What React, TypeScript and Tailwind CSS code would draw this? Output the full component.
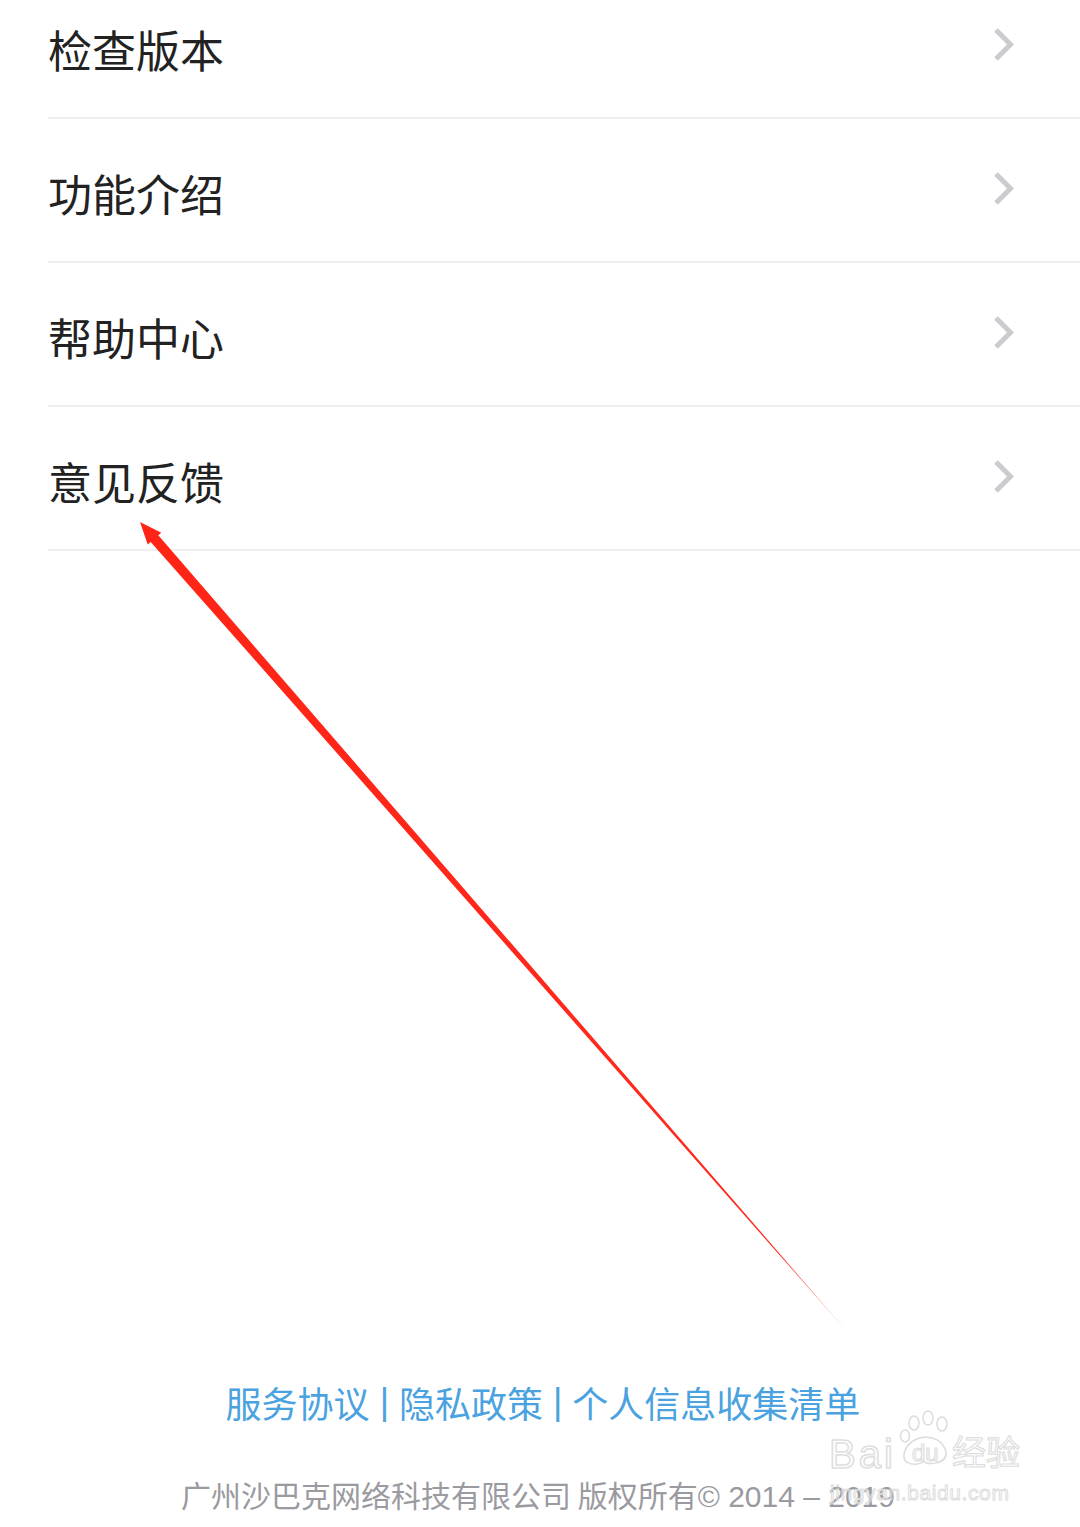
const items = ['检查版本', '功能介绍', '帮助中心', '意见反馈']

function Chevron() {
    return (
        <svg width="24" height="38" viewBox="0 0 24 38" className="mr-[64px] -mt-[8px]">
            <path d="M4 4 L18.5 18.5 L4 33" fill="none" stroke="#cbcbcf" strokeWidth="5" />
        </svg>
    )
}

// red annotation arrow drawn over the page
function Arrow() {
    return (
        <svg width="1080" height="1527" viewBox="0 0 1080 1527" className="absolute left-0 top-0 pointer-events-none">
            <defs>
                <linearGradient id="fade" x1="140" y1="522" x2="850" y2="1335" gradientUnits="userSpaceOnUse">
                    <stop offset="0" stopColor="#ff2415" />
                    <stop offset="0.9" stopColor="#ff2a1f" />
                    <stop offset="1" stopColor="#ff3b30" stopOpacity="0.25" />
                </linearGradient>
            </defs>
            <polygon
                points="140,522 161.3,532.7 158.3,535.3 850,1335 150.7,541.9 147.7,544.5"
                fill="url(#fade)"
            />
        </svg>
    )
}

function Watermark() {
    return (
        <div className="absolute left-[826px] top-[1408px] w-[200px] h-[96px] pointer-events-none font-['Liberation_Sans',sans-serif]">
            <svg width="200" height="96" viewBox="0 0 200 96" className="absolute left-0 top-0">
                <g fill="none" stroke="#dcdcdc" strokeWidth="1.5">
                    <ellipse cx="88" cy="15" rx="5" ry="7" />
                    <ellipse cx="102" cy="10" rx="5" ry="7" />
                    <ellipse cx="116" cy="16" rx="5" ry="7" />
                    <ellipse cx="79" cy="28" rx="4.5" ry="6" />
                    <path d="M78 46 C 82 26, 114 22, 120 44 C 122 56, 100 58, 98 53 C 92 58, 76 58, 78 46 Z" />
                </g>
            </svg>
            <div className="absolute left-[3px] top-[26px] text-[40px] leading-none text-transparent [-webkit-text-stroke:1.5px_#dedede] tracking-[3px]">
                Bai
            </div>
            <div className="absolute left-[86px] top-[33px] text-[24px] leading-none text-transparent [-webkit-text-stroke:1.2px_#dedede]">
                du
            </div>
            <div className="absolute left-[126px] top-[26px] text-[34px] leading-none text-transparent [-webkit-text-stroke:1.2px_#dedede] font-['Noto_Sans_CJK_SC',sans-serif]">
                经验
            </div>
            <div className="absolute left-[4px] top-[74px] text-[21px] leading-none text-transparent [-webkit-text-stroke:1px_#dcdcdc] tracking-[0.6px]">
                jingyan.baidu.com
            </div>
        </div>
    )
}

export default function App() {
    return (
        <div className="relative w-[1080px] h-[1527px] overflow-hidden bg-white flex flex-col font-['Noto_Sans_CJK_SC','Noto_Sans',sans-serif]">
            <div className="-mt-[25px]">
                {items.map((label) => (
                    <div
                        key={label}
                        className="ml-[48px] h-[144px] border-b-2 border-[#efefef] flex items-center justify-between pt-[6px]"
                    >
                        <span className="text-[44px] leading-none text-[#222222]">{label}</span>
                        <Chevron />
                    </div>
                ))}
            </div>

            <div className="flex-1" />

            <div className="flex flex-col items-center pb-[12px]">
                <div className="text-[36px] leading-[44px] text-[#4aa2e0] flex gap-[10px] pl-[6px]">
                    <span>服务协议</span>
                    <span className="font-['Liberation_Sans',sans-serif] font-light">|</span>
                    <span>隐私政策</span>
                    <span className="font-['Liberation_Sans',sans-serif] font-light">|</span>
                    <span>个人信息收集清单</span>
                </div>
                <div className="mt-[52px] text-[30px] leading-[36px] text-[#9a9aa0] pr-[4px]">
                    广州沙巴克网络科技有限公司 版权所有
                    <span className="font-['Liberation_Sans',sans-serif]">© 2014 – 2019</span>
                </div>
            </div>

            <Watermark />
            <Arrow />
        </div>
    )
}
